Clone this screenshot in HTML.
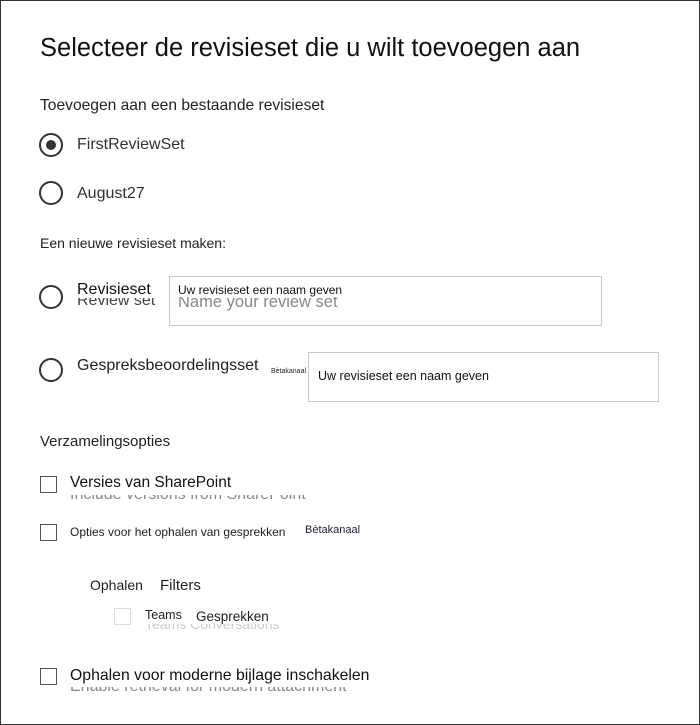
<!DOCTYPE html>
<html><head><style>
body{margin:0;width:700px;height:725px;overflow:hidden;background:#fff;font-family:"Liberation Sans",Arial,sans-serif;color:#222}
.frame{position:absolute;left:0;top:0;width:698px;height:723px;border:1px solid #333}
.a{position:absolute;white-space:nowrap}
.radio{position:absolute;width:24px;height:24px;border:2px solid #333;border-radius:50%;box-sizing:border-box}
.radio.on::after{content:"";position:absolute;left:5px;top:5px;width:10px;height:10px;border-radius:50%;background:#333}
.cb{position:absolute;width:17px;height:17px;border:1.5px solid #555;box-sizing:border-box}
.box{position:absolute;border:1.5px solid #c8c8c8;box-sizing:border-box;background:#fff}
</style></head><body>
<div class="frame"></div>
<div class="a" style="left:40px;top:34px;font-size:25.5px;color:#111">Selecteer de revisieset die u wilt toevoegen aan</div>
<div class="a" style="left:40px;top:97px;font-size:15.6px">Toevoegen aan een bestaande revisieset</div>
<div class="radio on" style="left:39px;top:133px"></div>
<div class="a" style="left:77px;top:136px;font-size:16px;color:#333">FirstReviewSet</div>
<div class="radio" style="left:39px;top:181px"></div>
<div class="a" style="left:77px;top:185px;font-size:16px;color:#333">August27</div>
<div class="a" style="left:40px;top:235px;font-size:14px">Een nieuwe revisieset maken:</div>
<div class="radio" style="left:39px;top:285px"></div>
<div class="a" style="left:77px;top:292px;font-size:16px;color:#444;clip-path:inset(6px 0 0 0)">Review set</div>
<div class="a" style="left:77px;top:281px;font-size:16px;color:#111;background:#fff;line-height:17px">Revisieset</div>
<div class="box" style="left:169px;top:276px;width:433px;height:50px"></div>
<div class="a" style="left:178px;top:293px;font-size:16.5px;color:#888">Name your review set</div>
<div class="a" style="left:178px;top:284px;font-size:12px;color:#111;background:#fff;line-height:13px">Uw revisieset een naam geven</div>
<div class="radio" style="left:39px;top:358px"></div>
<div class="a" style="left:77px;top:357px;font-size:16px;color:#222">Gespreksbeoordelingsset</div>
<div class="a" style="left:271px;top:368px;font-size:7px">Bètakanaal</div>
<div class="box" style="left:308px;top:352px;width:351px;height:50px"></div>
<div class="a" style="left:318px;top:369px;font-size:12.5px;color:#111">Uw revisieset een naam geven</div>
<div class="a" style="left:40px;top:433px;font-size:15px">Verzamelingsopties</div>
<div class="cb" style="left:40px;top:476px"></div>
<div class="a" style="left:70px;top:486px;font-size:16px;color:#888;clip-path:inset(9px 0 0 0)">Include versions from SharePoint</div>
<div class="a" style="left:70px;top:474px;font-size:15.5px;color:#111;line-height:17px;background:#fff">Versies van SharePoint</div>
<div class="cb" style="left:40px;top:524px"></div>
<div class="a" style="left:70px;top:525px;font-size:12px">Opties voor het ophalen van gesprekken</div>
<div class="a" style="left:305px;top:524px;font-size:11px;color:#223">Bètakanaal</div>
<div class="a" style="left:90px;top:577px;font-size:14px">Ophalen</div>
<div class="a" style="left:160px;top:577px;font-size:15px">Filters</div>
<div class="cb" style="left:114px;top:608px;border-color:#ddd"></div>
<div class="a" style="left:145px;top:616px;font-size:14px;color:#ccc;clip-path:inset(8px 0 0 0)">Teams Conversations</div>
<div class="a" style="left:145px;top:608px;font-size:12.5px;color:#222;background:#fff;line-height:14px">Teams</div>
<div class="a" style="left:196px;top:609px;font-size:13.5px;color:#222;background:#fff;line-height:15px">Gesprekken</div>
<div class="cb" style="left:40px;top:668px"></div>
<div class="a" style="left:70px;top:678px;font-size:16px;color:#888;clip-path:inset(9px 0 0 0)">Enable retrieval for modern attachment</div>
<div class="a" style="left:70px;top:667px;font-size:15.8px;color:#111;line-height:17px;background:#fff">Ophalen voor moderne bijlage inschakelen</div>
</body></html>
